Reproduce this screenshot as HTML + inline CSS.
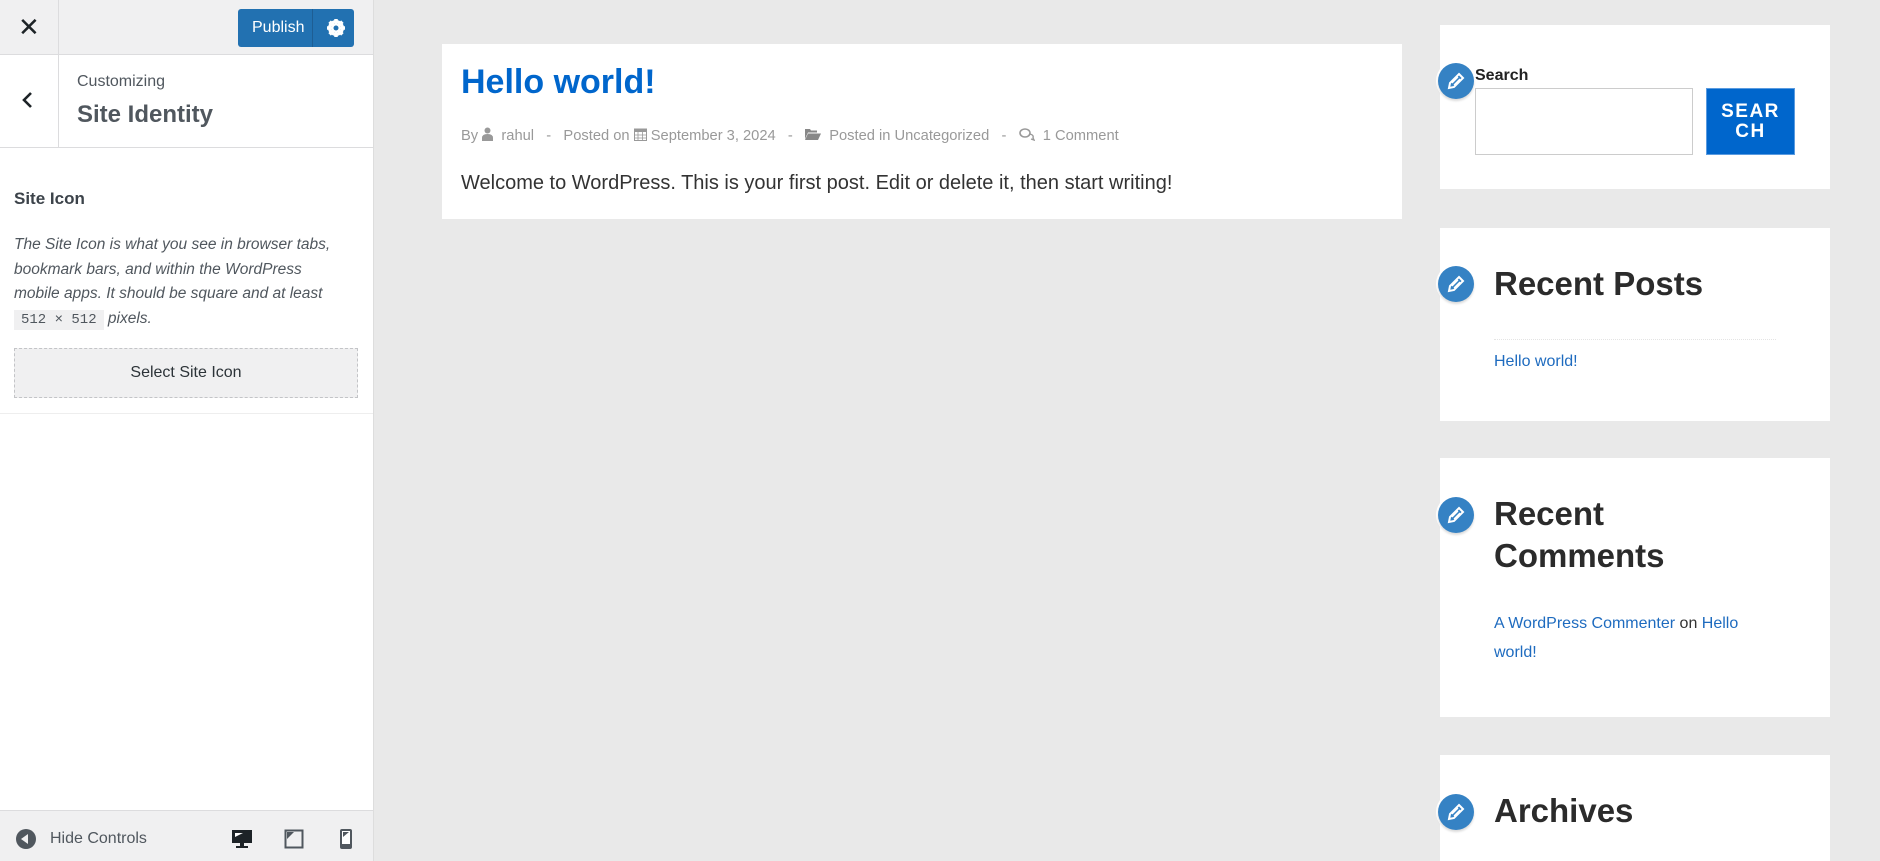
<!DOCTYPE html>
<html><head><meta charset="utf-8"><style>
*{margin:0;padding:0;box-sizing:border-box}
body{width:1880px;height:861px;overflow:hidden;background:#e9e9e9;font-family:"Liberation Sans",sans-serif;position:relative}
.a{position:absolute}
#side{left:0;top:0;width:374px;height:861px;background:#fff;border-right:1px solid #ddd}
.pen{position:absolute;width:36px;height:36px;border-radius:50%;background:#3582c4;box-shadow:0 2px 2px rgba(0,0,0,.15),0 0 0 2px #fff}
.pen svg{position:absolute;left:9px;top:9px}
.w{position:absolute;left:1440px;width:390px;background:#fff}
.wh{position:absolute;left:54px;font-weight:bold;font-size:33px;color:#2b2b2b;line-height:42px}
.lnk{color:#1e6bbf}
.mi{display:inline-block;vertical-align:-1px}
</style></head><body>
<div id="side" class="a">
 <div class="a" style="left:0;top:0;width:373px;height:55px;background:#f0f0f1;border-bottom:1px solid #dcdcde"></div>
 <div class="a" style="left:58px;top:0;width:1px;height:55px;background:#dcdcde"></div>
 <div class="a" style="left:18px;top:12px;font-size:26px;color:#1d2327">✕</div>
 <div class="a" style="left:238px;top:9px;width:116px;height:38px;background:#2271b1;border-radius:3px;color:#fff;font-size:16px;line-height:38px;padding-left:14px">Publish</div>
 <div class="a" style="left:312px;top:9px;width:1px;height:38px;background:#1e5e94"></div>
 <svg class="a" style="left:326px;top:18px" width="20" height="20" viewBox="0 0 20 20"><circle cx="10" cy="10" r="6.5" fill="none" stroke="#fff" stroke-width="3"/><g stroke="#fff" stroke-width="3.5"><line x1="10" y1="1" x2="10" y2="19"/><line x1="1" y1="10" x2="19" y2="10"/><line x1="3.6" y1="3.6" x2="16.4" y2="16.4"/><line x1="16.4" y1="3.6" x2="3.6" y2="16.4"/></g><circle cx="10" cy="10" r="2.5" fill="#2271b1"/></svg>
 <div class="a" style="left:0;top:147px;width:373px;height:1px;background:#dcdcde"></div>
 <div class="a" style="left:58px;top:55px;width:1px;height:92px;background:#dcdcde"></div>
 <svg class="a" style="left:21px;top:91px" width="12" height="18" viewBox="0 0 12 18"><path d="M10 2L3 9l7 7" fill="none" stroke="#1d2327" stroke-width="2.6"/></svg>
 <div class="a" style="left:77px;top:73px;font-size:16px;color:#50575e">Customizing</div>
 <div class="a" style="left:77px;top:101px;font-size:24px;font-weight:bold;color:#50575e">Site Identity</div>
 <div class="a" style="left:14px;top:189px;font-size:17px;font-weight:bold;color:#3c434a">Site Icon</div>
 <div class="a" style="left:14px;top:233px;width:320px;font-size:15.5px;font-style:italic;color:#50575e;line-height:24.5px">The Site Icon is what you see in browser tabs, bookmark bars, and within the WordPress mobile apps. It should be square and at least <span style="font-style:normal;background:#f0f0f1;padding:2px 7px;font-family:'Liberation Mono',monospace;font-size:14px;white-space:nowrap">512 × 512</span> pixels.</div>
 <div class="a" style="left:14px;top:348px;width:344px;height:50px;background:#f0f0f1;border:1px dashed #c3c4c7;text-align:center;line-height:48px;font-size:16px;color:#2c3338">Select Site Icon</div>
 <div class="a" style="left:0;top:413px;width:373px;height:1px;background:#eee"></div>
 <div class="a" style="left:0;top:810px;width:373px;height:51px;background:#f0f0f1;border-top:1px solid #dcdcde"></div>
 <div class="a" style="left:16px;top:829px;width:20px;height:20px;border-radius:50%;background:#50575e"></div>
 <div class="a" style="left:21px;top:834px;width:0;height:0;border-top:5px solid transparent;border-bottom:5px solid transparent;border-right:7px solid #f0f0f1"></div>
 <div class="a" style="left:50px;top:830px;font-size:16px;color:#50575e">Hide Controls</div>
 <svg class="a" style="left:231px;top:828px" width="22" height="22" viewBox="0 0 22 22"><rect x="1" y="2" width="20" height="13" fill="#1d2327"/><path d="M4 5h8l-8 4z" fill="#fff"/><rect x="9" y="15" width="4" height="3" fill="#1d2327"/><rect x="5" y="18" width="12" height="2" fill="#1d2327"/></svg>
 <svg class="a" style="left:284px;top:829px" width="20" height="20" viewBox="0 0 20 20"><rect x="1.5" y="1.5" width="17" height="17" fill="none" stroke="#50575e" stroke-width="2"/><path d="M3 3h7l-7 7z" fill="#50575e"/></svg>
 <svg class="a" style="left:339px;top:828px" width="14" height="22" viewBox="0 0 14 22"><rect x="1" y="1" width="12" height="20" rx="2" fill="#50575e"/><rect x="3" y="3" width="8" height="13" fill="#fff"/><path d="M4 4h6l-6 5z" fill="#50575e"/></svg>
</div>

<div class="a" style="left:442px;top:44px;width:960px;height:175px;background:#fff">
 <div class="a" style="left:19px;top:19px;font-size:34px;font-weight:bold;color:#0066cc">Hello world!</div>
 <div class="a" style="left:19px;top:83px;font-size:14.7px;color:#999;white-space:nowrap">By <svg class="mi" width="11" height="14" viewBox="0 0 11 14"><circle cx="5.5" cy="3.5" r="3" fill="#999"/><path d="M0 14v-3q0-4 5.5-4t5.5 4v3z" fill="#999"/></svg>&nbsp; rahul &nbsp; - &nbsp; Posted on <svg class="mi" width="13" height="14" viewBox="0 0 13 14"><rect x="0.5" y="2" width="12" height="11.5" fill="none" stroke="#999"/><rect x="0.5" y="2" width="12" height="3" fill="#999"/><path d="M0 8h13M0 11h13M4 5v9M8.5 5v9" stroke="#999" stroke-width="0.8"/></svg> September 3, 2024 &nbsp; - &nbsp; <svg class="mi" width="16" height="13" viewBox="0 0 16 13"><path d="M0 1h5l1 1.5h6v2H3L0 11z" fill="#888"/><path d="M3 5.5h13L13 12H0z" fill="#888"/></svg>&nbsp; Posted in Uncategorized &nbsp; - &nbsp; <svg class="mi" width="16" height="13" viewBox="0 0 16 13"><ellipse cx="6" cy="5" rx="5" ry="4" fill="none" stroke="#999" stroke-width="1.6"/><path d="M11 6q4 1 3 4l1 2-3-1" fill="none" stroke="#999" stroke-width="1.4"/></svg>&nbsp; 1 Comment</div>
 <div class="a" style="left:19px;top:128px;font-size:20px;color:#333">Welcome to WordPress. This is your first post. Edit or delete it, then start writing!</div>
</div>

<div class="w" style="top:25px;height:164px">
 <div class="a" style="left:35px;top:42px;font-size:16px;font-weight:bold;color:#222">Search</div>
 <div class="a" style="left:35px;top:63px;width:218px;height:67px;border:1px solid #ccc"></div>
 <div class="a" style="left:266px;top:63px;width:89px;height:67px;background:#0066cc;border:1px solid #5a9be0;color:#fff;font-weight:bold;font-size:19px;letter-spacing:1.5px;text-align:center;line-height:20px;padding-top:13px">SEAR<br>CH</div>
</div>
<div class="w" style="top:228px;height:193px">
 <div class="wh" style="top:35px">Recent Posts</div>
 <div class="a" style="left:54px;top:111px;width:282px;border-top:1px dotted #e4e4e4"></div>
 <div class="a lnk" style="left:54px;top:125px;font-size:16px">Hello world!</div>
</div>
<div class="w" style="top:458px;height:259px">
 <div class="wh" style="top:35px">Recent<br>Comments</div>
 <div class="a" style="left:54px;top:151px;width:270px;font-size:16px;line-height:29px;color:#333"><span class="lnk">A WordPress Commenter</span> on <span class="lnk">Hello world!</span></div>
</div>
<div class="w" style="top:755px;height:106px">
 <div class="wh" style="top:35px">Archives</div>
</div>
<div class="pen" style="left:1438px;top:63px"><svg width="18" height="18" viewBox="0 0 18 18"><path d="M12 2l4 4-9 9-5 1 1-5z" fill="none" stroke="#fff" stroke-width="2"/><path d="M5 11l6-6M7 13l6-6" stroke="#fff" stroke-width="1.3"/></svg></div>
<div class="pen" style="left:1438px;top:266px"><svg width="18" height="18" viewBox="0 0 18 18"><path d="M12 2l4 4-9 9-5 1 1-5z" fill="none" stroke="#fff" stroke-width="2"/><path d="M5 11l6-6M7 13l6-6" stroke="#fff" stroke-width="1.3"/></svg></div>
<div class="pen" style="left:1438px;top:497px"><svg width="18" height="18" viewBox="0 0 18 18"><path d="M12 2l4 4-9 9-5 1 1-5z" fill="none" stroke="#fff" stroke-width="2"/><path d="M5 11l6-6M7 13l6-6" stroke="#fff" stroke-width="1.3"/></svg></div>
<div class="pen" style="left:1438px;top:794px"><svg width="18" height="18" viewBox="0 0 18 18"><path d="M12 2l4 4-9 9-5 1 1-5z" fill="none" stroke="#fff" stroke-width="2"/><path d="M5 11l6-6M7 13l6-6" stroke="#fff" stroke-width="1.3"/></svg></div>
</body></html>
